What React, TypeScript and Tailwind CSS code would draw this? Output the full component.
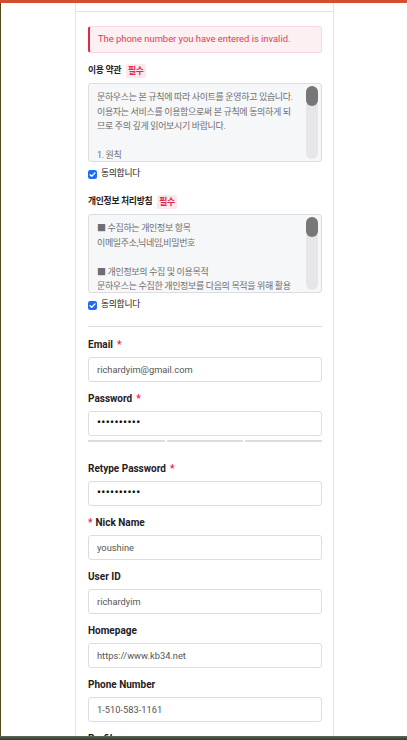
import React from 'react'

const font = { fontFamily: 'Roboto, "Noto Sans CJK KR", sans-serif' }

const Field = ({ label, value, req, before, pw }: { label: string; value: string; req?: boolean; before?: boolean; pw?: boolean }) => (
    <div className="flex flex-col">
        <label className="text-[10px] font-bold text-[#1f2024] leading-[12px] h-[12px] whitespace-nowrap">
            {before && <span className="text-[#e0284b] mr-[3px]">*</span>}
            {label}
            {req && <span className="text-[#e0284b] ml-[4px]">*</span>}
        </label>
        <div className="mt-[6px] h-[25px] border border-[#dcdde2] rounded-[3px] bg-white flex items-center px-[8px]">
            <span className={pw ? 'text-[11px] font-bold text-[#111] tracking-[0.4px]' : 'text-[9.3px] text-[#555]'}>{value}</span>
        </div>
    </div>
)

const Terms = ({ title, lines, mt }: { title: string; lines: string[]; mt: string }) => (
    <div className={'flex flex-col ' + mt}>
        <div className="flex items-center gap-[5px] h-[14px]">
            <span className="text-[8.8px] font-bold text-[#1f2024] tracking-[-0.3px]">{title}</span>
            <span className="bg-[#fde8ec] text-[#e0284b] text-[8.8px] font-bold px-[2px] h-[14px] leading-[14px] rounded-[2px] tracking-[-0.3px]">필수</span>
        </div>
        <div className="mt-[5px] h-[79px] border border-[#dcdde2] rounded-[3px] bg-[#f6f7f9] flex overflow-hidden">
            <div className="flex-1 pl-[8px] pt-[6px] text-[9px] leading-[14.6px] text-[#6e6e6e] tracking-[-0.35px] overflow-hidden">
                {lines.map((l, i) => (
                    <div key={i} className="h-[14.6px] whitespace-nowrap">{l}</div>
                ))}
            </div>
            <div className="w-[12px] mr-[3px] my-[2px] rounded-full bg-[#e6e6e8] flex flex-col shrink-0">
                <div className="h-[20px] rounded-full bg-[#777777]" />
            </div>
        </div>
        <div className="flex items-center gap-[4px] mt-[6px] h-[12px]">
            <svg width="9" height="9" viewBox="0 0 10 10">
                <rect x="0" y="0" width="10" height="10" rx="2.5" fill="#1e6df0" />
                <path d="M2.3 5.2 L4.2 7 L7.8 3.2" stroke="#fff" strokeWidth="1.5" fill="none" strokeLinecap="round" strokeLinejoin="round" />
            </svg>
            <span className="text-[8.8px] text-[#222] tracking-[-0.3px]">동의합니다</span>
        </div>
    </div>
)

export default function App() {
    return (
        <div className="w-[407px] h-[740px] bg-white overflow-hidden relative" style={font}>
            <div className="h-[3px] bg-[#d24e2f]" />
            <div className="flex items-start">
                <div className="w-[1px] h-[737px] bg-[#4f4a22]" />
                <div className="ml-[74px] w-[259px] border-x border-[#e3e3ea]">
                    <div className="h-[9px] border-b border-[#e3e3ea]" />
                    <div className="pl-[12px] pr-[11px] pt-[14px] pb-[40px]">
                        <div className="h-[27px] bg-[#fdf0f2] border border-[#f7d9de] border-l-2 border-l-[#e0284b] rounded-[3px] flex items-center pl-[8px]">
                            <span className="text-[9.4px] text-[#e23a55] whitespace-nowrap">The phone number you have entered is invalid.</span>
                        </div>
                        <Terms
                            mt="mt-[11px]"
                            title="이용 약관"
                            lines={[
                                '문하우스는 본 규칙에 따라 사이트를 운영하고 있습니다.',
                                '이용자는 서비스를 이용함으로써 본 규칙에 동의하게 되',
                                '므로 주의 깊게 읽어보시기 바랍니다.',
                                '',
                                '1. 원칙',
                            ]}
                        />
                        <Terms
                            mt="mt-[15px]"
                            title="개인정보 처리방침"
                            lines={[
                                '■ 수집하는 개인정보 항목',
                                '이메일주소,닉네임,비밀번호',
                                '',
                                '■ 개인정보의 수집 및 이용목적',
                                '문하우스는 수집한 개인정보를 다음의 목적을 위해 활용',
                            ]}
                        />
                        <div className="mt-[15px] h-[1px] bg-[#dcdde2]" />
                        <div className="mt-[12px] flex flex-col gap-[11px]">
                            <Field label="Email" value="richardyim@gmail.com" req />
                            <div className="flex flex-col">
                                <Field label="Password" value="••••••••••" req pw />
                                <div className="mt-[4px] flex gap-[2px]">
                                    <div className="flex-1 h-[2px] bg-[#dcdde2]" />
                                    <div className="flex-1 h-[2px] bg-[#dcdde2]" />
                                    <div className="flex-1 h-[2px] bg-[#dcdde2]" />
                                </div>
                            </div>
                            <div className="mt-[10px]">
                                <Field label="Retype Password" value="••••••••••" req pw />
                            </div>
                            <Field label="Nick Name" value="youshine" before />
                            <Field label="User ID" value="richardyim" />
                            <Field label="Homepage" value="https://www.kb34.net" />
                            <Field label="Phone Number" value="1-510-583-1161" />
                            <Field label="Profile" value="" />
                        </div>
                    </div>
                </div>
            </div>
            <div className="absolute left-0 right-0 bottom-0 h-[4px] bg-gradient-to-b from-[#5d6a58] to-[#2f3a2d]" />
        </div>
    )
}
